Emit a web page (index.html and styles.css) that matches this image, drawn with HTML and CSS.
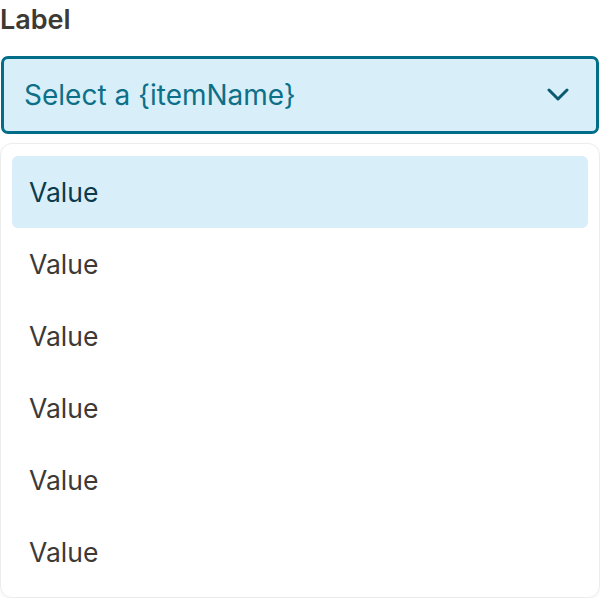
FILE: index.html
```html
<!DOCTYPE html>
<html lang="en">
<head>
    <meta charset="UTF-8">
    <meta name="viewport" content="width=device-width, initial-scale=1.0">
    <title>Select</title>
    <link rel="stylesheet" href="styles.css">
</head>
<body>
    <div class="field">
        <label class="field-label">Label</label>
        <div class="select-box">
            <span class="select-placeholder">Select a {itemName}</span>
            <svg class="chevron" width="22" height="14" viewBox="0 0 22 14">
                <path d="M2 2 L11 11 L20 2" fill="none" stroke="#0b5a72" stroke-width="3" stroke-linecap="round" stroke-linejoin="round"/>
            </svg>
        </div>
        <ul class="options">
            <li class="option active">Value</li>
            <li class="option">Value</li>
            <li class="option">Value</li>
            <li class="option">Value</li>
            <li class="option">Value</li>
            <li class="option">Value</li>
        </ul>
    </div>
</body>
</html>
```

FILE: styles.css
```css
body {
    margin: 0;
    font-family: Inter, "Noto Sans", sans-serif;
    background: #ffffff;
    color: #3d3935;
}

.field {
    display: flex;
    flex-direction: column;
}

.field-label {
    font-size: 27px;
    font-weight: 600;
    line-height: 32px;
    margin-top: 4px;
    color: #3d3935;
}

.select-box {
    margin-top: 20px;
    margin-left: 1px;
    margin-right: 1px;
    height: 72px;
    border: 3px solid #006e89;
    border-radius: 7px;
    background: #d8eff9;
    display: flex;
    align-items: center;
    justify-content: space-between;
    padding: 0 27px 0 20px;
}

.select-placeholder {
    font-size: 28px;
    color: #0d7088;
}

.chevron {
    display: block;
}

.options {
    list-style: none;
    margin: 9px 0 0;
    padding: 12px 11px 9px;
    border: 1px solid #ececec;
    border-radius: 12px;
    box-shadow: 0 1px 3px rgba(0, 0, 0, 0.06);
}

.option {
    height: 72px;
    display: flex;
    align-items: center;
    padding: 0 17px;
    font-size: 26.5px;
    color: #3d3935;
    border-radius: 6px;
}

.option.active {
    background: #d8eef8;
    color: #0b3a4d;
}
```
